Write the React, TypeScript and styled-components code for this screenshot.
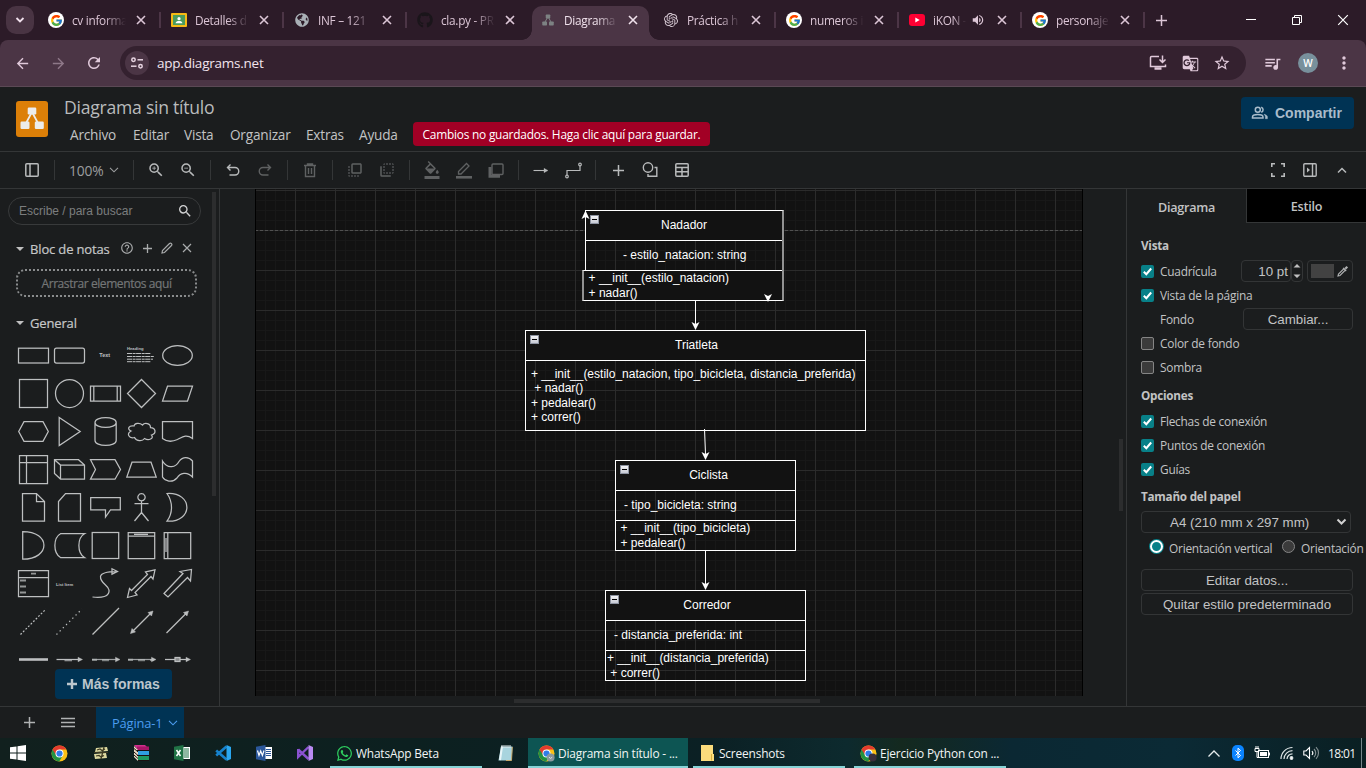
import React from "react";
import styled, { createGlobalStyle, css } from "styled-components";
import {
  MdZoomIn, MdZoomOut, MdStarOutline, MdQueueMusic, MdMoreVert,
  MdSearch, MdHelpOutline, MdArrowBack, MdArrowForward, MdRefresh,
  MdFlipToFront, MdFlipToBack, MdFormatColorFill, MdGTranslate, MdVolumeUp,
} from "react-icons/md";
import { FcGoogle } from "react-icons/fc";
import { FaGithub, FaWhatsapp, FaGlobeAmericas } from "react-icons/fa";
import { SiOpenai } from "react-icons/si";

const Global = createGlobalStyle`
  * { box-sizing: border-box; }
  html, body { margin: 0; padding: 0; background: #1b1d1e; overflow: hidden; }
  svg { display: block; flex: none; }
`;

const ui = `"Open Sans", "Noto Sans", sans-serif`;
const arial = `"Liberation Sans", Arial, sans-serif`;

const Screen = styled.div`
  width: 1366px;
  height: 768px;
  display: flex;
  flex-direction: column;
  overflow: hidden;
  font-family: ${ui};
  white-space: nowrap;
  color: #c0c0c0;
`;

/* ---------- browser chrome ---------- */

const TabStrip = styled.div`
  height: 40px;
  flex: none;
  background: #2c1b28;
  display: flex;
  align-items: center;
  color: #dcc6d6;
`;
const TabSearch = styled.div`
  width: 28px;
  height: 28px;
  margin: 0 4px 0 6px;
  border-radius: 10px;
  background: #493443;
  display: flex;
  align-items: center;
  justify-content: center;
`;
const Tab = styled.div<{ $active?: boolean; $sep?: boolean }>`
  width: 123px;
  height: 40px;
  flex: none;
  display: flex;
  align-items: center;
  padding-left: 10px;
  position: relative;
  z-index: 0;
  ${(p) => p.$sep && css`
    &::after {
      content: "";
      position: absolute;
      right: 0;
      top: 12px;
      width: 2px;
      height: 16px;
      background: #4c3546;
    }
  `}
  ${(p) => p.$active && css`
    color: #f0e2ec;
    &::before {
      content: "";
      position: absolute;
      z-index: -1;
      left: 2px;
      right: 4px;
      top: 6px;
      bottom: 0;
      border-radius: 10px 10px 0 0;
      background: #4b3545;
    }
  `}
`;
const Flare = styled.span<{ $side: "left" | "right" }>`
  position: absolute;
  bottom: 0;
  width: 10px;
  height: 10px;
  ${(p) => (p.$side === "left" ? "left: -8px;" : "right: -6px;")}
  background: radial-gradient(circle at ${(p) => (p.$side === "left" ? "0 0" : "100% 0")}, transparent 9.5px, #4b3545 10px);
`;
const TabIcon = styled.div`
  width: 16px;
  height: 16px;
  display: flex;
  align-items: center;
  justify-content: center;
`;
const WhiteDisc = styled.div`
  width: 16px;
  height: 16px;
  border-radius: 8px;
  background: #fff;
  display: flex;
  align-items: center;
  justify-content: center;
`;
const TabTitle = styled.div<{ $w?: number }>`
  width: ${(p) => p.$w ?? 54}px;
  margin-left: 8px;
  font-size: 11.8px;
  letter-spacing: -0.28px;
  overflow: hidden;
  mask-image: linear-gradient(90deg, #000 60%, transparent 100%);
`;
const TabSound = styled.div`
  width: 16px;
  margin-left: 5px;
`;
const TabClose = styled.div`
  width: 16px;
  margin-left: auto;
  margin-right: 12px;
  display: flex;
  justify-content: center;
`;
const NewTab = styled.div`
  margin-left: 6px;
  width: 20px;
  display: flex;
  justify-content: center;
`;
const WindowButtons = styled.div`
  margin-left: auto;
  display: flex;
  color: #fff;
`;
const WindowButton = styled.div`
  width: 46px;
  height: 40px;
  display: flex;
  align-items: center;
  justify-content: center;
`;
const AddressRow = styled.div`
  height: 47px;
  display: flex;
  align-items: center;
  background: #4b3545;
  border-bottom: 1px solid #5b4955;
  border-radius: 8px 8px 0 0;
  padding: 0 4px;
  color: #e0c9da;
`;
const AddressBack = styled.div`
  background: #2c1b28;
  flex: none;
`;
const NavButton = styled.div<{ $dim?: boolean }>`
  width: 36px;
  display: flex;
  justify-content: center;
  opacity: ${(p) => (p.$dim ? 0.45 : 1)};
`;
const Omnibox = styled.div`
  width: 1126px;
  height: 34px;
  margin-left: 8px;
  border-radius: 17px;
  background: #34212f;
  display: flex;
  align-items: center;
  padding: 0 8px 0 5px;
`;
const SiteInfo = styled.div`
  width: 24px;
  height: 24px;
  border-radius: 12px;
  background: #4b3545;
  display: flex;
  align-items: center;
  justify-content: center;
`;
const Url = styled.div`
  margin-left: 8px;
  font-size: 13.5px;
  letter-spacing: -0.23px;
  color: #f1e4ed;
  flex: 1;
`;
const BarIcon = styled.div<{ $w?: number }>`
  width: ${(p) => p.$w ?? 32}px;
  display: flex;
  justify-content: center;
`;
const Avatar = styled.div`
  width: 20px;
  height: 20px;
  border-radius: 10px;
  background: #78909c;
  color: #fff;
  font: 600 10px ${ui};
  display: flex;
  align-items: center;
  justify-content: center;
`;

/* ---------- editor header ---------- */

const Header = styled.div`
  height: 65px;
  flex: none;
  background: #1b1d1e;
  border-bottom: 1px solid #343637;
  display: flex;
  padding: 10px 12px 0 16px;
`;
const Logo = styled.div`
  width: 32px;
  height: 36px;
  margin-top: 4px;
  border-radius: 3px;
  background: #dc7f08;
`;
const TitleBlock = styled.div`
  margin-left: 16px;
  flex: 1;
`;
const DocTitle = styled.div`
  font-size: 17.6px;
  line-height: 20px;
  letter-spacing: -0.25px;
  color: #b9bbbc;
`;
const MenuBar = styled.div`
  display: flex;
  align-items: center;
  height: 24px;
  margin-top: 5px;
  padding-left: 6px;
  font-size: 13.6px;
  letter-spacing: -0.2px;
  color: #c2c3c4;
`;
const MenuItem = styled.div<{ $w: number }>`
  width: ${(p) => p.$w}px;
`;
const SaveNotice = styled.div`
  width: 297px;
  height: 24px;
  border-radius: 4px;
  background: #a20025;
  color: #fff;
  font-size: 11.9px;
  letter-spacing: -0.22px;
  line-height: 25px;
  text-align: center;
`;
const ShareButton = styled.div`
  width: 113px;
  height: 32px;
  border-radius: 4px;
  background: #003354;
  color: #a9bccb;
  font: bold 14px ${arial};
  display: flex;
  align-items: center;
  padding-left: 10px;
  gap: 6px;
`;

const Toolbar = styled.div`
  height: 37px;
  flex: none;
  background: #1b1d1e;
  border-bottom: 1px solid #343637;
  display: flex;
  align-items: center;
  padding: 0 8px 0 16px;
`;
const Tool = styled.div<{ $dim?: boolean }>`
  width: 32px;
  display: flex;
  justify-content: center;
  color: ${(p) => (p.$dim ? "#5f6162" : "#b8babb")};
`;
const ToolSep = styled.div`
  width: 1px;
  height: 20px;
  margin: 0 6px;
  background: #343637;
`;
const ZoomLevel = styled.div`
  width: 66px;
  padding-left: 8px;
  display: flex;
  align-items: center;
  font-size: 13.8px;
  letter-spacing: -0.1px;
  gap: 5px;
  color: #9c9e9f;
`;
const Spacer = styled.div`
  flex: 1;
`;

/* ---------- workspace ---------- */

const Workspace = styled.div`
  height: 518px;
  flex: none;
  display: flex;
  background: #1b1d1e;
  border-bottom: 1px solid #343637;
`;
const Sidebar = styled.div`
  width: 220px;
  flex: none;
  border-right: 1px solid #343637;
  display: flex;
`;
const SidebarBody = styled.div`
  width: 212px;
  display: flex;
  flex-direction: column;
`;
const SideScroll = styled.div`
  width: 4px;
  height: 304px;
  margin-top: 3px;
  background: #2c2d2e;
`;
const SearchBox = styled.div`
  width: 193px;
  height: 28px;
  flex: none;
  margin: 8px 0 14px 8px;
  border: 1px solid #383a3b;
  border-radius: 14px;
  display: flex;
  align-items: center;
  justify-content: space-between;
  padding: 0 7px 0 10px;
  font: 12px ${arial};
  color: #7b7d7e;
`;
const SectionTitle = styled.div`
  height: 20px;
  flex: none;
  display: flex;
  align-items: center;
  padding-left: 16px;
  font-size: 13px;
  letter-spacing: -0.15px;
  color: #c6c7c8;
  -webkit-text-stroke: 0.2px #c6c7c8;
`;
const Caret = styled.span`
  border: 4.5px solid transparent;
  border-top: 4.5px solid #c0c0c0;
  border-bottom: 0;
  margin-right: 6px;
`;
const SectionTools = styled.div`
  display: flex;
  align-items: center;
  margin-left: auto;
  margin-right: 15px;
  padding-bottom: 2px;
  color: #a9abac;
`;
const SectionTool = styled.div`
  width: 20px;
  display: flex;
  justify-content: center;
`;
const DropHere = styled.div`
  width: 181px;
  height: 28px;
  flex: none;
  margin: 10px 0 16px 16px;
  border: 2px dotted #8a8c8d;
  border-radius: 9px;
  color: #747677;
  font-size: 12px;
  letter-spacing: -0.42px;
  line-height: 26px;
  text-align: center;
  -webkit-text-stroke: 0.2px #747677;
`;
const Palette = styled.div`
  display: grid;
  grid-template-columns: repeat(5, 36px);
  grid-auto-rows: 38px;
  height: 331px;
  flex: none;
  overflow: hidden;
  margin: 3px 0 0 15px;
`;
const MoreShapes = styled.div`
  width: 117px;
  height: 30px;
  flex: none;
  margin: 2px 0 0 55px;
  border-radius: 4px;
  background: #003354;
  color: #bcc6cd;
  font: bold 14px ${arial};
  display: flex;
  align-items: center;
  justify-content: center;
  gap: 5px;
`;

const CanvasArea = styled.div`
  width: 907px;
  flex: none;
  display: flex;
  flex-wrap: wrap;
  align-content: flex-start;
  border-right: 1px solid #343637;
`;
const Page = styled.div`
  width: 828px;
  height: 507px;
  margin-left: 35px;
  position: relative;
  background-color: #121212;
  background-image: linear-gradient(#2b2b2b 1px, transparent 1px),
    linear-gradient(90deg, #2b2b2b 1px, transparent 1px),
    linear-gradient(#181818 1px, transparent 1px),
    linear-gradient(90deg, #181818 1px, transparent 1px);
  background-size: 40px 40px, 40px 40px, 10px 10px, 10px 10px;
  background-position: 0 1px, 0 0, 0 1px, 0 0;
  border-right: 1px solid #000;
  border-left: 1px solid #000;
  background-origin: border-box;
  overflow: hidden;
`;
const VScroll = styled.div`
  width: 4px;
  height: 72px;
  margin: 250px 0 0 36px;
  background: #2c2d2e;
`;
const HScroll = styled.div`
  width: 306px;
  height: 4px;
  margin: 3px 0 0 294px;
  background: #2c2d2e;
`;
const Edges = styled.svg`
  position: absolute;
  left: -1px;
  top: 0;
`;
const ClassBox = styled.div<{ $x: number; $y: number; $w: number; $h: number; $soft?: boolean }>`
  position: absolute;
  left: ${(p) => p.$x - 1}px;
  top: ${(p) => p.$y}px;
  width: ${(p) => p.$w}px;
  height: ${(p) => p.$h}px;
  border: 1px solid #fff;
  ${(p) => p.$soft && "border-right: 2px solid #929292;"}
  color: #fff;
  font: 12px ${arial};
  line-height: 14.4px;
`;
const ClassName = styled.div<{ $shift?: number }>`
  height: 29px;
  background: #121212;
  line-height: 29px;
  text-align: center;
  padding-left: ${(p) => p.$shift ?? 0}px;
  position: relative;
`;
const Collapse = styled.span`
  position: absolute;
  left: 4px;
  top: 4px;
  width: 9px;
  height: 9px;
  background: linear-gradient(#f4f4f6, #c6cad4);
  border: 1px solid #8c92a0;
  &::after {
    content: "";
    position: absolute;
    left: 1px;
    top: 3px;
    width: 5px;
    height: 1px;
    background: #000;
  }
`;
const Field = styled.div<{ $pad: number }>`
  height: 30px;
  border-top: 1px solid #fff;
  line-height: 29px;
  padding-left: ${(p) => p.$pad}px;
  white-space: pre;
`;
const Methods = styled.div<{ $pad: number; $top?: number; $bleed?: boolean }>`
  border-top: 1px solid #fff;
  padding: ${(p) => p.$top ?? 0}px 0 0 ${(p) => p.$pad}px;
  white-space: pre;
  ${(p) => !p.$top && "line-height: 15px;"}
  ${(p) => p.$bleed && css`
    height: 31px;
    margin-left: -4px;
    border-left: 2px solid #929292;
    border-bottom: 1px solid #fff;
    background: #121212;
  `}
`;

/* ---------- format panel ---------- */

const Panel = styled.div`
  flex: 1;
  overflow: hidden;
  font-size: 11.9px;
  letter-spacing: -0.24px;
  color: #c2c3c4;
`;
const PanelTabs = styled.div`
  display: flex;
  height: 35px;
`;
const PanelTab = styled.div<{ $idle?: boolean }>`
  width: ${(p) => (p.$idle ? 120 : 119)}px;
  height: ${(p) => (p.$idle ? 34 : 35)}px;
  text-align: center;
  line-height: ${(p) => (p.$idle ? 35 : 37)}px;
  font-size: 12.6px;
  font-weight: 600;
  ${(p) => p.$idle && css`
    background: #000;
    border-left: 1px solid #343637;
    border-bottom: 1px solid #343637;
  `}
`;
const PanelBody = styled.div`
  padding: 10px 0 0 14px;
`;
const PanelHeading = styled.div<{ $top?: number }>`
  height: 25px;
  margin-top: ${(p) => p.$top ?? 0}px;
  line-height: 23px;
  font-size: 11.7px;
  font-weight: 700;
`;
const Option = styled.div<{ $indent?: boolean }>`
  height: 24px;
  width: 212px;
  padding-left: ${(p) => (p.$indent ? 19 : 0)}px;
  display: flex;
  align-items: center;
`;
const Check = styled.span<{ $on?: boolean }>`
  width: 13px;
  height: 13px;
  margin-right: 6px;
  flex: none;
  border-radius: 2px;
  display: flex;
  background: ${(p) => (p.$on ? "#088088" : "#3b3b3b")};
  border: ${(p) => (p.$on ? "none" : "1px solid #858585")};
`;
const Label = styled.span`
  flex: 1;
`;
const NumberBox = styled.span`
  width: 50px;
  height: 22px;
  border: 1px solid #333536;
  border-radius: 4px;
  font: 13.33px/21px ${arial};
  letter-spacing: 0;
  text-align: right;
  padding-right: 2px;
`;
const Spinner = styled.span`
  width: 12px;
  height: 22px;
  border: 1px solid #333536;
  border-radius: 4px;
  display: flex;
  align-items: center;
  justify-content: center;
`;
const ColorBox = styled.span`
  width: 46px;
  height: 22px;
  margin-left: 4px;
  border: 1px solid #333536;
  border-radius: 4px;
  display: flex;
  align-items: center;
  justify-content: space-between;
  padding: 0 3px;
`;
const Swatch = styled.span`
  width: 23px;
  height: 14px;
  background: #424242;
`;
const PushButton = styled.div<{ $w: number; $mt?: number }>`
  width: ${(p) => p.$w}px;
  height: 22px;
  margin-top: ${(p) => p.$mt ?? 0}px;
  border: 1px solid #333536;
  border-radius: 4px;
  font: 13.33px/21px ${arial};
  letter-spacing: 0;
  text-align: center;
`;
const PaperSelect = styled.div`
  width: 210px;
  height: 22px;
  margin-top: 1px;
  border: 1px solid #333536;
  border-radius: 4px;
  font: 13.33px ${arial};
  letter-spacing: 0;
  display: flex;
  align-items: center;
  justify-content: space-between;
  padding: 0 3px 0 28px;
`;
const Orientation = styled.div`
  height: 30px;
  display: flex;
  align-items: center;
  padding-left: 9px;
`;
const Radio = styled.span<{ $on?: boolean }>`
  width: 13px;
  height: 13px;
  border-radius: 7px;
  flex: none;
  margin: 0 6px 4px 0;
  border: ${(p) => (p.$on ? "2px solid #fff" : "1px solid #858585")};
  background: ${(p) => (p.$on ? "#088088" : "#3b3b3b")};
  box-shadow: ${(p) => (p.$on ? "0 0 0 1px #088088" : "none")};
`;
const RadioLabel = styled.span<{ $w?: number }>`
  width: ${(p) => p.$w ?? 66}px;
  flex: none;
`;

/* ---------- page tabs ---------- */

const Footer = styled.div`
  height: 31px;
  flex: none;
  background: #1b1d1e;
  display: flex;
  align-items: center;
  padding-left: 10px;
  color: #b0b2b3;
`;
const FooterIcon = styled.div<{ $w: number }>`
  width: ${(p) => p.$w}px;
  display: flex;
  justify-content: center;
`;
const PageTab = styled.div`
  width: 88px;
  height: 31px;
  margin-left: 10px;
  background: #003354;
  color: #4c9df0;
  font-size: 12.9px;
  letter-spacing: -0.15px;
  padding-left: 16px;
  display: flex;
  align-items: center;
  gap: 5px;
`;

/* ---------- taskbar ---------- */

const Taskbar = styled.div`
  height: 30px;
  flex: none;
  display: flex;
  align-items: center;
  background: linear-gradient(90deg, #11201e 0, #0c2020 30%, #0b2024 52%, #0d2a2e 62%, #14291f 66%, #0b2833 74%, #0b2a35 86%, #0a1f22 100%);
  color: #f2f5f5;
  font-size: 11.9px;
  letter-spacing: -0.18px;
`;
const TaskIcon = styled.div<{ $w?: number }>`
  width: ${(p) => p.$w ?? 41}px;
  display: flex;
  justify-content: center;
`;
const TaskItem = styled.div<{ $w: number; $ml?: number; $active?: boolean }>`
  width: ${(p) => p.$w}px;
  margin-left: ${(p) => p.$ml ?? 0}px;
  height: 30px;
  display: flex;
  align-items: center;
  padding: 2px 0 0 ${(p) => (p.$active ? 10 : 6)}px;
  gap: 3px;
  border-bottom: 2px solid #86d3d6;
  background: ${(p) => (p.$active ? "#0d5553" : "transparent")};
`;
const Tray = styled.div`
  margin-left: auto;
  display: flex;
  align-items: center;
`;
const Clock = styled.div`
  width: 38px;
  padding-left: 5px;
  font-size: 12px;
  letter-spacing: -0.6px;
`;
const DesktopEdge = styled.div`
  width: 1px;
  height: 30px;
  background: #75868a;
  margin-right: 4px;
`;

/* ---------- drawings ---------- */

const Cross = ({ s = 10, w = 1.6 }: { s?: number; w?: number }) => (
  <svg width={s} height={s} viewBox="0 0 10 10" stroke="currentColor" strokeWidth={w}>
    <path d="M1 1L9 9M9 1L1 9" />
  </svg>
);
const Plus = ({ w = 1.5 }: { w?: number }) => (
  <svg width="11" height="11" stroke="currentColor" strokeWidth={w}><path d="M5.5 0V11M0 5.5H11" /></svg>
);
const Chevron = () => (
  <svg width="10" height="6" fill="none" stroke="currentColor" strokeWidth="1.1"><path d="M1 .8L5 4.8L9 .8" /></svg>
);
const People = () => (
  <svg width="18" height="14" viewBox="0 0 18 14" fill="none" stroke="currentColor" strokeWidth="1.5">
    <circle cx="6.8" cy="3.8" r="2.5" />
    <path d="M1.5 12V11C1.5 9.3 4 8.5 6.8 8.5S12 9.3 12 11V12z" />
    <path d="M10.2 1.3A2.6 2.6 0 0 1 10.2 6.3" />
    <path d="M13 8.3C15.5 8.9 16.4 9.8 16.4 11V12.7H14.4V11C14.4 10 14 9.2 13 8.3z" fill="currentColor" strokeWidth=".5" />
  </svg>
);
const Google = () => <WhiteDisc><FcGoogle size={13} /></WhiteDisc>;
const Classroom = () => (
  <svg width="16" height="14" viewBox="0 0 16 14">
    <rect width="16" height="14" rx="1" fill="#f5ba15" />
    <rect x="2" y="2" width="12" height="10" fill="#4a9c5d" />
    <circle cx="8" cy="5.7" r="1.6" fill="#fff" />
    <path d="M4.6 10.2c0-1.8 1.8-2.3 3.4-2.3s3.4.5 3.4 2.3z" fill="#fff" />
  </svg>
);
const Flow = ({ s, c }: { s: number; c: string }) => (
  <svg width={s} height={s} viewBox="0 0 24 24" fill={c}>
    <path d="M12 5L5 18M12 5L19 18" stroke={c} strokeWidth="2" />
    <rect x="7.5" y="1" width="9" height="8" rx="1.5" />
    <rect x="0.5" y="15" width="9.5" height="8" rx="1.5" />
    <rect x="14" y="15" width="9.5" height="8" rx="1.5" />
  </svg>
);
const YouTube = () => (
  <svg width="16" height="12" viewBox="0 0 16 12">
    <rect width="16" height="12" rx="3" fill="#ff0033" />
    <path d="M6.3 3.5L10.7 6L6.3 8.5z" fill="#fff" />
  </svg>
);
const Chrome = ({ badge, mark }: { badge?: string; mark?: string }) => (
  <svg width="17" height="17" viewBox="0 0 17 17">
    <circle cx="8.5" cy="8.5" r="8" fill="#fbc116" />
    <path d="M8.5 8.5L1.57 4.5A8 8 0 0 0 8.2 16.5L11.9 10.4z" fill="#229342" />
    <path d="M1.57 4.5A8 8 0 0 1 15.43 4.5H8.5L5 10z" fill="#e33b2e" />
    <circle cx="8.5" cy="8.5" r="4" fill="#fff" />
    <circle cx="8.5" cy="8.5" r="3.1" fill="#2f7de9" />
    {badge && <circle cx="12.6" cy="12.6" r="4" fill={badge} />}
    {mark && <path d="M11 12.2q1.6 2.4 3.2 0" fill="none" stroke={mark} />}
  </svg>
);

const S = "#bdbfc0";
const Cell = ({ children }: { children: React.ReactNode }) => (
  <svg width="36" height="38" viewBox="0 0 36 38" fill="none" stroke={S} strokeWidth="1.25">{children}</svg>
);
const tiny = { fill: S, stroke: "none", fontFamily: "Liberation Sans", fontWeight: 700 } as const;

const shapes: React.ReactNode[] = [
  <rect x="3.5" y="12.2" width="30" height="14.8" />,
  <rect x="3.5" y="12.2" width="30" height="14.8" rx="2" />,
  <text x="12.3" y="21" fontSize="5.5" {...tiny}>Text</text>,
  <>
    <text x="4" y="14" fontSize="4.2" {...tiny}>Heading</text>
    <path d="M4 17.5H28M4 20.5H31M4 23.2H30M4 25.7H28" strokeWidth="1" strokeDasharray="5 .6 3 .5" />
  </>,
  <ellipse cx="18.5" cy="19.5" rx="14.8" ry="9.8" />,

  <rect x="4.5" y="5.5" width="28" height="28" />,
  <circle cx="18.5" cy="19.5" r="14" />,
  <path d="M3.5 12.2H33.5V27H3.5zM6.8 12.2V27M30.2 12.2V27" />,
  <path d="M18.5 5.5L32.5 19.5L18.5 33.5L4.5 19.5z" />,
  <path d="M8.5 12.2H33.5L28.5 27H3.5z" />,

  <path d="M9 9.7H28L33.3 19.5L28 29.3H9L3.7 19.5z" />,
  <path d="M8.2 5.5L29.2 19.5L8.2 33.5z" />,
  <path d="M8 10.5V28.5C8 35 29.2 35 29.2 28.5V10.5C29.2 4 8 4 8 10.5zM8 10.5C8 17 29.2 17 29.2 10.5" />,
  <path d="M11 14C6 13 3.5 17 8 19C3 21.5 6 27 11.5 25.5C13.5 29.5 19.5 29.5 21.5 26.5C25.5 29 31.5 26.5 28.5 23C34 21.5 32.5 15.5 27.5 15.5C27.5 11 21.5 10.5 19.5 13C16.5 10.5 11.5 11 11 14z" />,
  <path d="M3.5 9.5H33.5V26.5C27 22 23.5 25 18.5 27.5C13 30 8 30 3.5 26.5z" />,

  <path d="M4.5 5.5H32.5V33.5H4.5zM11.5 5.5V33.5M4.5 12.5H32.5" />,
  <path d="M3.5 9.7H27.5L33.5 15V29H9.5L3.5 23.5zM3.5 9.7L9.5 15H33.5M9.5 15V29" />,
  <path d="M3.5 9.7H28L33.5 19.5L28 29.2H3.5L8.5 19.5z" />,
  <path d="M9 12.2H28L33.2 27H3.8z" />,
  <path d="M3.5 11C9 20 17 17 20 11.5C24 6 30 7 33.5 11V27C28 21 21 23 18 28C13 33.5 6 31 3.5 27z" />,

  <path d="M7.5 5.5H21.5L29.5 13.5V33.2H7.5zM21.5 5.5V13.5H29.5" />,
  <path d="M14.5 5.5H29.5V33.2H7.5V13.5z" />,
  <path d="M3.7 9.5H33.3V21.8H23.5L18.5 29V21.8H3.7z" />,
  <path d="M18.5 13V24.5M11.5 15.5H25.5M18.5 24.5L11.5 33M18.5 24.5L25.5 33M18.5 5.7a3.6 3.6 0 1 0 .01 0z" />,
  <path d="M8 5.5C34.5 4 34.5 34.5 8 33.2C14 25 14 14 8 5.5z" />,

  <path d="M7.7 5.5C36 5.5 36 33.2 7.7 33.2z" />,
  <path d="M9.5 7.7H33.5C26 12 26 27 33.5 31.5H9.5C2 27 2 12 9.5 7.7z" />,
  <rect x="5.2" y="6.5" width="26.5" height="26" />,
  <path d="M5.2 6.5H31.7V32.5H5.2zM5.2 10H31.7M11 8.3H25" />,
  <path d="M5.2 6.5H31.7V32.5H5.2zM8.8 6.5V32.5M7 12V26" />,

  <>
    <path d="M3.5 6.5H33.5V32.5H3.5zM3.5 13.5H33.5" />
    <path d="M16 9.7H21M5 16.5H11M5 22.5H11M5 28.5H11" strokeWidth="1.8" opacity=".75" />
  </>,
  <text x="5" y="21.5" fontSize="4.2" {...tiny}>List Item</text>,
  <path d="M5.5 33C14 34 23 33 22 26C21 21 13 19 13.5 12.5C14 8 22 7.5 30 7.5M25 4.8L30.5 7.5L25 10.2z" />,
  <path d="M4.5 33.5L6.5 24.5L8.5 26.5L24.5 10.5L22.5 8L32 5.8L30 15L28 12.5L12 28.5L14 31z" />,
  <path d="M5 29.5L24 9.5L21 7.5L32.5 5.5L31.5 17L28.5 13.5L9 33z" />,

  <path d="M5.5 32.5L31 7" strokeDasharray="1.8 1.8" />,
  <path d="M5.5 32.5L31 7" strokeDasharray="1.3 3.2" />,
  <path d="M5.5 32.5L32 6" />,
  <><path d="M9 30L28.5 10.5" /><path d="M7.5 31.5L9 26.5L12.5 30zM30 9L28.5 14L25 10.5z" fill={S} strokeWidth=".5" /></>,
  <><path d="M7.5 31L28 10.5" /><path d="M29.5 9L28 14L24.5 10.5z" fill={S} strokeWidth=".5" /></>,

  <path d="M4 19.5H33" strokeWidth="2.6" />,
  <><path d="M5.5 19.5H29" /><path d="M13.5 20.2H21" strokeWidth="2.2" opacity=".7" /><path d="M31.5 19.5L27 17.2V21.8z" fill={S} strokeWidth=".4" /></>,
  <><path d="M5 19.5H31" opacity=".8" /><path d="M5 19.8H10M15 20.2H22" strokeWidth="2.2" opacity=".6" /><path d="M33 19.5L28.5 17.2V21.8z" fill={S} strokeWidth=".4" /></>,
  <><path d="M5 19.5H31" opacity=".8" /><path d="M5 19.8H10M15 20.2H22M27 20H31" strokeWidth="2.2" opacity=".6" /><path d="M33 19.5L28.5 17.2V21.8z" fill={S} strokeWidth=".4" /></>,
  <><path d="M6 19.5H29" /><rect x="16" y="17.5" width="5" height="4" fill="#8a8c8d" /><path d="M31.5 19.5L27 17.2V21.8z" fill={S} strokeWidth=".4" /></>,
];

const tabs = [
  { icon: <Google />, title: "cv informa", sep: true },
  { icon: <Classroom />, title: "Detalles d", sep: true },
  { icon: <FaGlobeAmericas size={14} color="#a9b0b6" />, title: "INF – 121", sep: true },
  { icon: <FaGithub size={16} color="#1a151a" />, title: "cla.py - PR" },
  { icon: <Flow s={12} c="#7d8283" />, title: "Diagrama", active: true },
  { icon: <SiOpenai size={14} color="#d8cbd5" />, title: "Práctica h", sep: true },
  { icon: <Google />, title: "numeros i", sep: true },
  { icon: <YouTube />, title: "iKON -", sound: true, sep: true },
  { icon: <Google />, title: "personaje", sep: true },
];

const CheckMark = () => (
  <svg width="13" height="13" viewBox="0 0 13 13" fill="none" stroke="#fff" strokeWidth="2">
    <path d="M2.8 6.8L5.3 9.2L10.2 3.5" />
  </svg>
);
const CheckRow = ({ on, children, extra }: { on?: boolean; children: React.ReactNode; extra?: React.ReactNode }) => (
  <Option><Check $on={on}>{on && <CheckMark />}</Check><Label>{children}</Label>{extra}</Option>
);

export default function App() {
  return (
    <Screen>
      <Global />
      <TabStrip>
        <TabSearch>
          <svg width="10" height="10" viewBox="0 0 10 10" fill="none" stroke="#f0e0ec" strokeWidth="1.8"><path d="M1.5 3L5 6.5L8.5 3" /></svg>
        </TabSearch>
        {tabs.map((t, i) => (
          <Tab key={i} $active={t.active} $sep={t.sep}>
            {t.active && <><Flare $side="left" /><Flare $side="right" /></>}
            <TabIcon>{t.icon}</TabIcon>
            <TabTitle $w={t.sound ? 33 : 54}>{t.title}</TabTitle>
            {t.sound && <TabSound><MdVolumeUp size={14} /></TabSound>}
            <TabClose><Cross s={10} /></TabClose>
          </Tab>
        ))}
        <NewTab><Plus /></NewTab>
        <WindowButtons>
          <WindowButton><svg width="10" height="10" stroke="#fff"><path d="M0 4.5H10" /></svg></WindowButton>
          <WindowButton><svg width="10" height="10" stroke="#fff" fill="none"><path d="M.5 2.5H7.5V9.5H.5zM2.5 2.5V.5H9.5V7.5H7.5" /></svg></WindowButton>
          <WindowButton><Cross s={12} w={1} /></WindowButton>
        </WindowButtons>
      </TabStrip>
      <AddressBack>
        <AddressRow>
          <NavButton><MdArrowBack size={17} /></NavButton>
          <NavButton $dim><MdArrowForward size={17} /></NavButton>
          <NavButton><MdRefresh size={18} /></NavButton>
          <Omnibox>
            <SiteInfo>
              <svg width="14" height="14" viewBox="0 0 14 14" fill="none" stroke="#e8d5e2" strokeWidth="1.5">
                <circle cx="3.5" cy="3.8" r="1.7" /><path d="M7.5 3.8H13" /><circle cx="10.5" cy="10.2" r="1.7" /><path d="M1 10.2H6.5" />
              </svg>
            </SiteInfo>
            <Url>app.diagrams.net</Url>
            <BarIcon>
              <svg width="18" height="16" viewBox="0 0 18 16" fill="none" stroke="currentColor" strokeWidth="1.5">
                <path d="M10 1.5H2.5Q1.5 1.5 1.5 2.5V11.5H16.5V9.5M13.5 .5V7M10.5 4.5L13.5 7.5L16.5 4.5" />
                <path d="M5.5 13.5H12.5" strokeWidth="2.5" />
              </svg>
            </BarIcon>
            <BarIcon><MdGTranslate size={17} /></BarIcon>
            <BarIcon><MdStarOutline size={18} /></BarIcon>
          </Omnibox>
          <Spacer />
          <BarIcon $w={36}><MdQueueMusic size={19} /></BarIcon>
          <BarIcon $w={36}><Avatar>W</Avatar></BarIcon>
          <BarIcon $w={36}><MdMoreVert size={20} /></BarIcon>
        </AddressRow>
      </AddressBack>

      <Header>
        <Logo>
          <svg width="32" height="36" viewBox="0 0 32 36" fill="#ececec" stroke="#ececec">
            <path d="M16 11L9 24M16 11L23 24" strokeWidth="1.7" fill="none" />
            <rect x="11.7" y="6.5" width="8.6" height="7" rx="1.2" stroke="none" />
            <rect x="4.5" y="20.5" width="9" height="7.5" rx="1.2" stroke="none" />
            <rect x="18.8" y="20.5" width="9" height="7.5" rx="1.2" stroke="none" />
          </svg>
        </Logo>
        <TitleBlock>
          <DocTitle>Diagrama sin título</DocTitle>
          <MenuBar>
            <MenuItem $w={63}>Archivo</MenuItem>
            <MenuItem $w={51}>Editar</MenuItem>
            <MenuItem $w={46}>Vista</MenuItem>
            <MenuItem $w={76}>Organizar</MenuItem>
            <MenuItem $w={53}>Extras</MenuItem>
            <MenuItem $w={54}>Ayuda</MenuItem>
            <SaveNotice>Cambios no guardados. Haga clic aquí para guardar.</SaveNotice>
          </MenuBar>
        </TitleBlock>
        <ShareButton><People />Compartir</ShareButton>
      </Header>

      <Toolbar>
        <Tool><svg width="14" height="14" fill="none" stroke="currentColor" strokeWidth="1.5"><rect x=".8" y=".8" width="12.4" height="12.4" rx="1" /><path d="M5 1V13" /></svg></Tool>
        <ToolSep />
        <ZoomLevel>100%<Chevron /></ZoomLevel>
        <ToolSep />
        <Tool><MdZoomIn size={18} /></Tool>
        <Tool><MdZoomOut size={18} /></Tool>
        <ToolSep />
        <Tool><svg width="14" height="14" fill="none" stroke="currentColor" strokeWidth="1.4"><path d="M4.5 1.5L1.5 4.5L4.5 7.5M1.5 4.5H9A3.7 3.7 0 0 1 9 12H3.5" /></svg></Tool>
        <Tool $dim><svg width="14" height="14" fill="none" stroke="currentColor" strokeWidth="1.4"><path d="M9.5 1.5L12.5 4.5L9.5 7.5M12.5 4.5H5A3.7 3.7 0 0 0 5 12H10.5" /></svg></Tool>
        <ToolSep />
        <Tool $dim><svg width="14" height="15" fill="none" stroke="currentColor" strokeWidth="1.4"><path d="M1 2.5H13M4.5 2.5V1H9.5V2.5M2.5 2.5V13.5H11.5V2.5M5.5 5V11M8.5 5V11" /></svg></Tool>
        <ToolSep />
        <Tool $dim><MdFlipToFront size={18} /></Tool>
        <Tool $dim><MdFlipToBack size={18} /></Tool>
        <ToolSep />
        <Tool $dim><MdFormatColorFill size={18} /></Tool>
        <Tool $dim><svg width="16" height="17" fill="none" stroke="currentColor" strokeWidth="1.3"><path d="M2.5 12V9.5L10.5 1.5L13 4L5 12z" /><path d="M0 15.3H16" strokeWidth="2.6" /></svg></Tool>
        <Tool $dim><svg width="16" height="15" fill="none" stroke="currentColor" strokeWidth="1.4"><rect x="4" y="1" width="11" height="10.5" rx="1" /><path d="M2 4V13.3H12" strokeWidth="3" /></svg></Tool>
        <ToolSep />
        <Tool><svg width="16" height="9" fill="currentColor" stroke="currentColor"><path d="M.5 4.5H12" strokeWidth="1.1" /><path d="M15 4.5L11 2.3V6.7z" strokeWidth=".3" /></svg></Tool>
        <Tool><svg width="17" height="17" fill="none" stroke="currentColor" strokeWidth="1.2"><path d="M2 13V8.5H15V4" /><circle cx="2" cy="14.5" r="1.3" /><circle cx="15" cy="2.5" r="1.3" /></svg></Tool>
        <ToolSep />
        <Tool><Plus /></Tool>
        <Tool><svg width="16" height="16" fill="none" stroke="currentColor" strokeWidth="1.4"><circle cx="6" cy="5.5" r="4.7" /><path d="M12.5 5.5H14.8V14.3H6V12" /></svg></Tool>
        <Tool><svg width="14" height="14" fill="none" stroke="currentColor" strokeWidth="1.5"><rect x=".8" y=".8" width="12.4" height="12.4" rx="1" /><path d="M1 4.5H13M1 8.8H13M7 4.5V13" /></svg></Tool>
        <Spacer />
        <Tool><svg width="14" height="14" fill="none" stroke="currentColor" strokeWidth="1.6"><path d="M.8 4V.8H4M10 .8H13.2V4M13.2 10V13.2H10M4 13.2H.8V10" /></svg></Tool>
        <Tool><svg width="14" height="14" fill="none" stroke="currentColor" strokeWidth="1.4"><rect x=".8" y=".8" width="12.4" height="12.4" rx="1" /><path d="M9.5 1V13" /><path d="M4 4.5L7 7L4 9.5z" fill="currentColor" stroke="none" /></svg></Tool>
        <Tool><svg width="10" height="7" fill="none" stroke="currentColor" strokeWidth="1.5"><path d="M1 5.5L5 1.5L9 5.5" /></svg></Tool>
      </Toolbar>

      <Workspace>
        <Sidebar>
          <SidebarBody>
            <SearchBox>Escribe / para buscar<MdSearch size={16} color="#d2d3d4" /></SearchBox>
            <SectionTitle>
              <Caret />Bloc de notas
              <SectionTools>
                <SectionTool><MdHelpOutline size={14} /></SectionTool>
                <SectionTool><svg width="9" height="9" stroke="currentColor" strokeWidth="1.3"><path d="M4.5 0V9M0 4.5H9" /></svg></SectionTool>
                <SectionTool><svg width="12" height="12" fill="none" stroke="currentColor" strokeWidth="1.2"><path d="M1 11L1.5 8.5L8.5 1.5Q9.5 .7 10.5 1.7Q11.3 2.6 10.5 3.5L3.5 10.5z" /></svg></SectionTool>
                <SectionTool><Cross s={10} w={1.2} /></SectionTool>
              </SectionTools>
            </SectionTitle>
            <DropHere>Arrastrar elementos aquí</DropHere>
            <SectionTitle><Caret />General</SectionTitle>
            <Palette>{shapes.map((s, i) => <Cell key={i}>{s}</Cell>)}</Palette>
            <MoreShapes><svg width="10" height="10" stroke="currentColor" strokeWidth="2.4"><path d="M5 0V10M0 5H10" /></svg>Más formas</MoreShapes>
          </SidebarBody>
          <SideScroll />
        </Sidebar>

        <CanvasArea>
          <Page>
            <Edges width="828" height="507" viewBox="255 189 828 507">
              <path d="M255 230.5H1083" stroke="#505050" strokeDasharray="3 2" />
            </Edges>
            <ClassBox $x={330} $y={21} $w={199} $h={91} $soft>
              <ClassName><Collapse />Nadador</ClassName>
              <Field $pad={37}>- estilo_natacion: string</Field>
              <Methods $pad={4.6} $bleed>{"+ __init__(estilo_natacion)\n+ nadar()"}</Methods>
            </ClassBox>
            <ClassBox $x={270} $y={141} $w={341} $h={101}>
              <ClassName $shift={2}><Collapse />Triatleta</ClassName>
              <Methods $pad={5} $top={6}>{"+ __init__(estilo_natacion, tipo_bicicleta, distancia_preferida)\n + nadar()\n+ pedalear()\n+ correr()"}</Methods>
            </ClassBox>
            <ClassBox $x={360} $y={271} $w={181} $h={91}>
              <ClassName $shift={6}><Collapse />Ciclista</ClassName>
              <Field $pad={8}>- tipo_bicicleta: string</Field>
              <Methods $pad={4.5}>{"+ __init__(tipo_bicicleta)\n+ pedalear()"}</Methods>
            </ClassBox>
            <ClassBox $x={350} $y={401} $w={201} $h={91}>
              <ClassName $shift={3}><Collapse />Corredor</ClassName>
              <Field $pad={8}>- distancia_preferida: int</Field>
              <Methods $pad={1}>{"+ __init__(distancia_preferida)\n + correr()"}</Methods>
            </ClassBox>
            <Edges width="828" height="507" viewBox="255 189 828 507" fill="#fff" stroke="#fff">
              <path d="M695.5 301V324M704.5 429L705.5 454M705.5 551V584M585.5 218V270" />
              <g stroke="none">
                <path d="M695.5 330L691.5 322L695.5 324L699.5 322z" />
                <path d="M705.5 460L701.5 452L705.5 454L709.5 452z" />
                <path d="M705.5 590L701.5 582L705.5 584L709.5 582z" />
                <path d="M768 302L764 294L768 296L772 294z" />
                <path d="M585.5 210.5L581.5 219L585.5 217L589.5 219z" />
              </g>
            </Edges>
          </Page>
          <VScroll />
          <HScroll />
        </CanvasArea>

        <Panel>
          <PanelTabs><PanelTab>Diagrama</PanelTab><PanelTab $idle>Estilo</PanelTab></PanelTabs>
          <PanelBody>
            <PanelHeading>Vista</PanelHeading>
            <CheckRow on extra={<>
              <NumberBox>10 pt</NumberBox>
              <Spinner><svg width="8" height="14" fill="#c0c0c0"><path d="M4 0L7.5 3.5H.5zM4 14L7.5 10.5H.5z" /></svg></Spinner>
              <ColorBox><Swatch /><svg width="12" height="12" fill="none" stroke="#b0b2b3" strokeWidth="1.1"><path d="M1 11L1.5 9L7 3.5L8.5 5L3 10.5zM6 2.8L9.2 6" /><path d="M8.3 3.7L10.3 1.7" strokeWidth="2.2" /></svg></ColorBox>
            </>}>Cuadrícula</CheckRow>
            <CheckRow on>Vista de la página</CheckRow>
            <Option $indent><Label>Fondo</Label><PushButton $w={110}>Cambiar...</PushButton></Option>
            <CheckRow>Color de fondo</CheckRow>
            <CheckRow>Sombra</CheckRow>
            <PanelHeading $top={5}>Opciones</PanelHeading>
            <CheckRow on>Flechas de conexión</CheckRow>
            <CheckRow on>Puntos de conexión</CheckRow>
            <CheckRow on>Guías</CheckRow>
            <PanelHeading $top={4}>Tamaño del papel</PanelHeading>
            <PaperSelect>A4 (210 mm x 297 mm)<svg width="11" height="8" fill="none" stroke="#d0d0d0" strokeWidth="2"><path d="M1.5 1.5L5.5 5.5L9.5 1.5" /></svg></PaperSelect>
            <Orientation>
              <Radio $on /><RadioLabel $w={113}>Orientación vertical</RadioLabel>
              <Radio /><RadioLabel>Orientación</RadioLabel>
            </Orientation>
            <PushButton $w={212} $mt={6}>Editar datos...</PushButton>
            <PushButton $w={212} $mt={2}>Quitar estilo predeterminado</PushButton>
          </PanelBody>
        </Panel>
      </Workspace>

      <Footer>
        <FooterIcon $w={39}><Plus /></FooterIcon>
        <FooterIcon $w={37}><svg width="14" height="11" stroke="currentColor" strokeWidth="1.5"><path d="M0 1.5H14M0 5.5H14M0 9.5H14" /></svg></FooterIcon>
        <PageTab>Página-1<Chevron /></PageTab>
      </Footer>

      <Taskbar>
        <TaskIcon $w={36}><svg width="16" height="16" fill="#fff"><path d="M0 2.3L6.5 1.4V7.5H0zM7.5 1.3L16 0V7.5H7.5zM0 8.5H6.5V14.6L0 13.7zM7.5 8.5H16V16L7.5 14.7z" /></svg></TaskIcon>
        <TaskIcon $w={46}><Chrome /></TaskIcon>
        <TaskIcon $w={37}>
          <svg width="16" height="14"><path d="M3 2L14 1L15 5L2 6zM1 8L13 7L14 12L2 13z" fill="#ddd9a0" /><path d="M4 4L7 3L9 4.5L12 3M3 10L6 9.5L8 11L11 9.5M1 6.5H15M11 1L8 13" stroke="#3d3a22" fill="none" strokeWidth="1.2" /></svg>
        </TaskIcon>
        <TaskIcon $w={44}>
          <svg width="17" height="16"><path d="M1 0H12L16 4H4z" fill="#d0308e" /><path d="M4 1.5H16V5H4z" fill="#a81668" /><path d="M4 6H16V10H4z" fill="#2f9fe0" /><path d="M4 11H16V15H4z" fill="#1e9a60" /><path d="M1 1L5 5V16L1 12z" fill="#eee0c8" /><path d="M1 3.5L5 7M1 7L5 10.5M1 10L5 13.5M4 5.5H16M4 10.5H16M5 15.5H16" stroke="#1a1010" /></svg>
        </TaskIcon>
        <TaskIcon $w={38}>
          <svg width="16" height="16"><rect x="7" y="2" width="9" height="12" fill="#fff" /><path d="M10 4H15M10 6H15M10 8H15M10 10H15M10 12H15" stroke="#217346" /><path d="M0 1.7L9.5 0V16L0 14.3z" fill="#217346" /><path d="M2.5 5L6.5 11M6.5 5L2.5 11" stroke="#fff" strokeWidth="1.5" /></svg>
        </TaskIcon>
        <TaskIcon $w={44}>
          <svg width="16" height="16" fill="none"><path d="M11.5 1.5L1.2 10.5M11.5 14.5L1.2 5.5" stroke="#1682cc" strokeWidth="2.6" /><path d="M11.5 0L16 2V14L11.5 16z" fill="#2aa7f0" /></svg>
        </TaskIcon>
        <TaskIcon $w={38}>
          <svg width="16" height="16"><rect x="8" y="2" width="8" height="12" fill="#fff" /><path d="M10 4.5H15M10 6.5H15M10 8.5H15M10 10.5H15" stroke="#2b579a" /><path d="M0 1.7L9.5 0V16L0 14.3z" fill="#2b579a" /><path d="M1.5 5.5L3 10.5L4.7 6L6.4 10.5L8 5.5" stroke="#fff" strokeWidth="1.2" fill="none" /></svg>
        </TaskIcon>
        <TaskIcon $w={44}>
          <svg width="16" height="16" fill="none"><path d="M1.2 4V12L11.5 2M1.2 4.5L11.5 14" stroke="#8a52d0" strokeWidth="2.4" /><path d="M11.5 0L16 2V14L11.5 16z" fill="#b98af2" /></svg>
        </TaskIcon>
        <TaskItem $w={152} $ml={3}><FaWhatsapp size={17} color="#2ecc5e" />WhatsApp Beta</TaskItem>
        <TaskIcon $w={46}>
          <svg width="15" height="16"><path d="M3 1.5H14.5L13.5 15.5H.5z" fill="#a8d4de" /><path d="M4 1.5L2 15" stroke="#e8f5f8" strokeWidth="2" /><path d="M14.3 2L13.5 15.5H8" stroke="#c9a96a" fill="none" /><path d="M4 0V3M6 0V3M8 0V3M10 0V3M12 0V3" stroke="#e4eef0" /></svg>
        </TaskIcon>
        <TaskItem $w={160} $active><Chrome badge="#8b9aa1" mark="#dfe5e8" />Diagrama sin título - ...</TaskItem>
        <TaskItem $w={152} $ml={5}>
          <svg width="17" height="16"><path d="M2 0H14V9H15V16H2z" fill="#fbdc7c" /><path d="M12.5 9V15.5" stroke="#d9ae3c" /></svg>Screenshots
        </TaskItem>
        <TaskItem $w={152} $ml={9}><Chrome badge="#3a2f3c" />Ejercicio Python con ...</TaskItem>
        <Tray>
          <TaskIcon $w={24}><svg width="12" height="7" fill="none" stroke="#e6ecec" strokeWidth="1.3"><path d="M.5 6.5L6 1L11.5 6.5" /></svg></TaskIcon>
          <TaskIcon $w={24}><svg width="12" height="16"><rect width="12" height="16" rx="5" fill="#0a84ff" /><path d="M3.5 5.5L8.5 10.5L6 12.8V3.2L8.5 5.5L3.5 10.5" stroke="#fff" fill="none" /></svg></TaskIcon>
          <TaskIcon $w={24}><svg width="16" height="14" fill="none" stroke="#fff"><rect x="4.5" y="4.5" width="10" height="7" /><rect x="6.5" y="6.5" width="6" height="3" fill="#fff" /><path d="M15.5 6.5V9.5M1 2.5H5V5.5H1zM2 0V2.5M4 0V2.5M3 6V11.5H5" /></svg></TaskIcon>
          <TaskIcon $w={25}><svg width="14" height="14" fill="none" stroke="#dfe6e6" strokeWidth="1.2"><path d="M1 13A11.5 11.5 0 0 1 12.5 1.5M4 13A8.5 8.5 0 0 1 12.5 4.7M7 13A5.5 5.5 0 0 1 12.5 7.8" /><circle cx="11.5" cy="12" r="1.3" fill="#fff" /></svg></TaskIcon>
          <TaskIcon $w={24}><svg width="17" height="14" fill="none" stroke="#fff" strokeWidth="1.1"><path d="M.8 5H3L6.5 1.5V12.5L3 9H.8zM9 5A3 3 0 0 1 9 9" /><path d="M11 3A5.5 5.5 0 0 1 11 11M13 1.2A8 8 0 0 1 13 12.8" opacity=".5" /></svg></TaskIcon>
          <Clock>18:01</Clock>
          <DesktopEdge />
        </Tray>
      </Taskbar>
    </Screen>
  );
}
